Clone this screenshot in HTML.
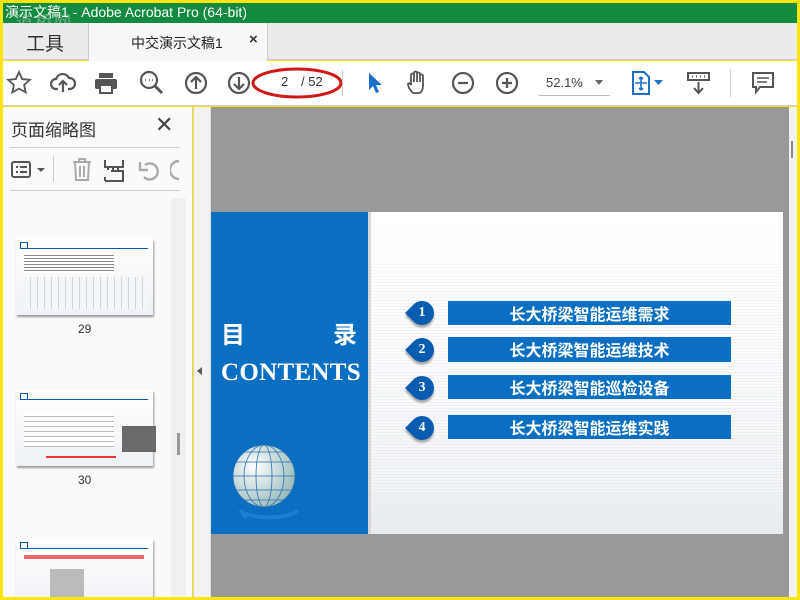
<!DOCTYPE html>
<html><head><meta charset="utf-8"><style>
*{margin:0;padding:0;box-sizing:border-box}
body{width:800px;height:600px;overflow:hidden;background:#ffe600;font-family:"Liberation Sans","Noto Sans CJK SC",sans-serif;position:relative}
.a{position:absolute}
svg{position:absolute}
.thumb{position:absolute;left:13px;width:137px;height:76px;background:linear-gradient(#fff,#eef1f5);box-shadow:1px 2px 2px #999}
.thumb .h{position:absolute;left:4px;top:3px;width:8px;height:7px;border:1.5px solid #0a5cb0}
.thumb .l{position:absolute;left:12px;top:9px;width:120px;height:1px;background:#0a5cb0}
.bar{position:absolute;left:448px;width:283px;background:#0a6fc2;color:#fff;font-weight:bold;font-size:16px;text-align:center;font-family:"Noto Sans CJK SC",sans-serif}
.num{position:absolute;left:410px;width:24px;height:24px;background:#0a5cb0;border-radius:50% 50% 50% 0;transform:rotate(45deg);box-shadow:2px 2px 2px #aaa}
.num span{display:block;transform:rotate(-45deg);color:#fff;font:bold 14px "Liberation Serif",serif;text-align:center;line-height:24px}
</style></head><body>
<div class="a" style="left:3px;top:3px;width:794px;height:20px;background:#128a3f;color:#fff;font-size:14px;line-height:19px;padding-left:2px">演示文稿1 - Adobe Acrobat Pro (64-bit)</div>
<div class="a" style="left:16px;top:8px;color:#c8d0c8;font-size:17px;opacity:.5;letter-spacing:2px">道桥网</div>
<div class="a" style="left:3px;top:23px;width:794px;height:37px;background:#ebebeb;border-bottom:1px solid #ccc"></div>
<div class="a" style="left:26px;top:29px;font-size:19px;color:#333">工具</div>
<div class="a" style="left:88px;top:23px;width:180px;height:38px;background:#f7f7f7;border-left:1px solid #ccc;border-right:1px solid #ccc"></div>
<div class="a" style="left:131px;top:33px;font-size:14px;color:#222">中交演示文稿1</div>
<div class="a" style="left:249px;top:31px;font-size:15px;color:#333;font-weight:bold">×</div>
<div class="a" style="left:3px;top:61px;width:794px;height:45px;background:#fff;border-bottom:1px solid #ccc"></div>
<svg style="left:6px;top:70px" width="26" height="26" viewBox="0 0 26 26"><path d="M13 2l3.2 7 7.6.8-5.7 5.1 1.6 7.5L13 18.6l-6.7 3.8 1.6-7.5L2.2 9.8l7.6-.8z" fill="none" stroke="#555" stroke-width="1.8"/></svg>
<svg style="left:50px;top:70px" width="26" height="26" viewBox="0 0 26 26"><path d="M8 19H6a5 5 0 0 1 0-10 7 7 0 0 1 13-1 5 5 0 0 1 1 11h-2M13 22V11M9 15l4-4 4 4" fill="none" stroke="#555" stroke-width="2.2"/></svg>
<svg style="left:93px;top:70px" width="26" height="26" viewBox="0 0 26 26"><rect x="6" y="3" width="14" height="5" fill="#555"/><rect x="2" y="9" width="22" height="10" rx="2" fill="#555"/><rect x="7" y="15" width="12" height="8" fill="#fff" stroke="#555" stroke-width="2"/></svg>
<svg style="left:139px;top:70px" width="26" height="26" viewBox="0 0 26 26"><circle cx="10" cy="10" r="8" fill="none" stroke="#555" stroke-width="2.2"/><path d="M16 16l7 7" stroke="#555" stroke-width="3"/><path d="M6 10h1M10 10h1M14 10h-1" stroke="#555" stroke-width="1.6"/></svg>
<svg style="left:183px;top:70px" width="26" height="26" viewBox="0 0 26 26"><circle cx="13" cy="13" r="10" fill="none" stroke="#555" stroke-width="2.2"/><path d="M13 19V7M8 12l5-5 5 5" fill="none" stroke="#555" stroke-width="2.2"/></svg>
<svg style="left:226px;top:70px" width="26" height="26" viewBox="0 0 26 26"><circle cx="13" cy="13" r="10" fill="none" stroke="#555" stroke-width="2.2"/><path d="M13 7v12M8 14l5 5 5-5" fill="none" stroke="#555" stroke-width="2.2"/></svg>
<div class="a" style="left:281px;top:74px;font-size:13px;color:#333">2</div>
<div class="a" style="left:301px;top:74px;font-size:13px;color:#333">/ 52</div>
<svg style="left:250px;top:64px" width="96" height="38" viewBox="0 0 96 38"><ellipse cx="47" cy="19" rx="44" ry="14" fill="none" stroke="#d01818" stroke-width="3"/></svg>
<div class="a" style="left:342px;top:70px;width:1px;height:26px;background:#ccc"></div>
<svg style="left:366px;top:71px" width="20" height="24" viewBox="0 0 20 24"><path d="M3 2v17l4-4 3 7 3-1-3-7h6z" fill="#1a6fc9"/></svg>
<svg style="left:406px;top:70px" width="26" height="26" viewBox="0 0 26 26"><path d="M7 23c-3-3-5-6-5-9 0-1 2-1 3 1V5a1.3 1.3 0 0 1 3 0v7V3a1.3 1.3 0 0 1 3 0v9V4a1.3 1.3 0 0 1 3 0v8V6a1.3 1.3 0 0 1 3 0v10c0 4-2 7-4 7z" fill="none" stroke="#555" stroke-width="1.8"/></svg>
<svg style="left:450px;top:70px" width="26" height="26" viewBox="0 0 26 26"><circle cx="13" cy="13" r="10" fill="none" stroke="#555" stroke-width="2.2"/><path d="M8 13h10" stroke="#555" stroke-width="2.2"/></svg>
<svg style="left:494px;top:70px" width="26" height="26" viewBox="0 0 26 26"><circle cx="13" cy="13" r="10" fill="none" stroke="#555" stroke-width="2.2"/><path d="M8 13h10M13 8v10" stroke="#555" stroke-width="2.2"/></svg>
<div class="a" style="left:546px;top:75px;font-size:13px;color:#444">52.1%</div>
<div class="a" style="left:595px;top:80px;border:4px solid transparent;border-top:5px solid #666"></div>
<div class="a" style="left:539px;top:95px;width:71px;height:1px;background:#bbb"></div>
<svg style="left:631px;top:70px" width="36" height="26" viewBox="0 0 36 26"><path d="M2 2h11l5 5v17H2z" fill="#fff" stroke="#1a6fc9" stroke-width="2"/><path d="M10 7v13M4 13h12M10 7l-2 2M10 7l2 2M10 20l-2-2M10 20l2-2" stroke="#1a6fc9" stroke-width="1.6" fill="none"/><path d="M23 10h9l-4.5 5z" fill="#1a6fc9"/></svg>
<svg style="left:686px;top:70px" width="26" height="26" viewBox="0 0 26 26"><rect x="2" y="3" width="21" height="7" fill="none" stroke="#555" stroke-width="2"/><path d="M6 6.5h1M10 6.5h1M14 6.5h1M18 6.5h1" stroke="#555" stroke-width="2"/><path d="M12.5 12v11M8 18l4.5 5 4.5-5" fill="none" stroke="#555" stroke-width="2"/></svg>
<div class="a" style="left:730px;top:69px;width:1px;height:28px;background:#ccc"></div>
<svg style="left:751px;top:71px" width="24" height="24" viewBox="0 0 24 24"><path d="M2 2h20v14H9l-4 5v-5H2z" fill="none" stroke="#555" stroke-width="2"/><path d="M6 7h12M6 11h10" stroke="#555" stroke-width="1.6"/></svg>
<!-- left panel -->
<div class="a" style="left:3px;top:107px;width:190px;height:490px;background:#fafafa;border-right:1px solid #ccc;overflow:hidden">
<div class="a" style="left:8px;top:9px;font-size:17px;color:#333">页面缩略图</div>
<div class="a" style="left:152px;top:5px;font-size:22px;color:#444">✕</div>
<div class="a" style="left:7px;top:40px;width:170px;height:1px;background:#ccc"></div>
<div class="a" style="left:50px;top:49px;width:1px;height:26px;background:#ccc"></div>
<div class="a" style="left:7px;top:83px;width:170px;height:1px;background:#ccc"></div>
<div class="a" style="left:168px;top:91px;width:15px;height:402px;background:#f0f0f0"></div>
<div class="a" style="left:174px;top:326px;width:3px;height:22px;background:#999"></div>
<div class="thumb" style="top:132px"><div class="h"></div><div class="l"></div><div class="a" style="left:8px;top:14px;width:90px;height:20px;background:repeating-linear-gradient(#fff 0 2px,#888 2px 3px)"></div><div class="a" style="left:8px;top:38px;width:122px;height:32px;background:repeating-linear-gradient(90deg,#f4f6f8 0 6px,#cfd4d8 6px 7px)"></div></div>
<div class="a" style="left:75px;top:215px;font-size:12px;color:#333">29</div>
<div class="thumb" style="top:283px"><div class="h"></div><div class="l"></div><div class="a" style="left:8px;top:22px;width:90px;height:35px;background:repeating-linear-gradient(#fff 0 4px,#bbb 4px 5px)"></div><div class="a" style="left:106px;top:36px;width:34px;height:26px;background:#6a6a6a"></div><div class="a" style="left:30px;top:66px;width:70px;height:2px;background:#e33"></div></div>
<div class="a" style="left:75px;top:366px;font-size:12px;color:#333">30</div>
<div class="thumb" style="top:432px;height:70px"><div class="h"></div><div class="l"></div><div class="a" style="left:8px;top:16px;width:120px;height:4px;background:#e66"></div><div class="a" style="left:34px;top:30px;width:34px;height:28px;background:#bbb"></div></div>
</div>
<svg style="left:10px;top:158px" width="40" height="24" viewBox="0 0 40 24"><rect x="2" y="4" width="18" height="15" rx="2" fill="none" stroke="#555" stroke-width="2"/><path d="M6 9h2M10 9h7M6 14h2M10 14h7" stroke="#555" stroke-width="2"/><path d="M27 10h8l-4 4z" fill="#555"/></svg>
<svg style="left:70px;top:157px" width="24" height="26" viewBox="0 0 24 26"><path d="M3 5h18M9 5V2h6v3M5 5l1 18h12l1-18M10 9v11M14 9v11" fill="none" stroke="#aaa" stroke-width="2"/></svg>
<svg style="left:103px;top:157px" width="22" height="26" viewBox="0 0 22 26"><path d="M2 3v7h18V3M2 20v4M8 14h12v10H2" fill="none" stroke="#555" stroke-width="2"/><path d="M4 12h2M9 12h2M14 12h2" stroke="#555" stroke-width="2"/></svg>
<svg style="left:137px;top:157px" width="26" height="26" viewBox="0 0 26 26"><path d="M8 8a8 8 0 1 1-1 12" fill="none" stroke="#aaa" stroke-width="2.4"/><path d="M3 5v8h8" fill="none" stroke="#aaa" stroke-width="2.4"/></svg>
<svg style="left:170px;top:157px" width="10" height="26" viewBox="0 0 10 26"><path d="M9 4a9 9 0 0 0 0 18" fill="none" stroke="#aaa" stroke-width="2.4"/></svg>
<!-- collapse strip -->
<div class="a" style="left:194px;top:107px;width:17px;height:490px;background:#f2f2f2;border-right:1px solid #ddd"></div>
<div class="a" style="left:197px;top:367px;border:4px solid transparent;border-right:5px solid #555;border-left:0"></div>
<!-- page area -->
<div class="a" style="left:211px;top:107px;width:578px;height:490px;background:#999"></div>
<div class="a" style="left:789px;top:107px;width:8px;height:490px;background:#f2f2f2"></div>
<div class="a" style="left:791px;top:141px;width:2px;height:17px;background:#888"></div>
<!-- slide -->
<div class="a" style="left:211px;top:212px;width:572px;height:322px;background:linear-gradient(#fff 0%,#fafbfc 40%,#e9ecef 100%)"></div>
<div class="a" style="left:370px;top:262px;width:413px;height:230px;opacity:.35;background:repeating-linear-gradient(#fff 0 2px,#dfe2e6 2px 3px)"></div>
<div class="a" style="left:211px;top:212px;width:157px;height:322px;background:#0a6fc2"></div>
<div class="a" style="left:368px;top:212px;width:3px;height:322px;background:#d8d8d8"></div>
<div class="a" style="left:221px;top:315px;color:#fff;font:bold 24px 'Noto Sans CJK SC',sans-serif">目</div>
<div class="a" style="left:333px;top:315px;color:#fff;font:bold 24px 'Noto Sans CJK SC',sans-serif">录</div>
<div class="a" style="left:221px;top:359px;color:#fff;font:bold 25px 'Liberation Serif',serif;letter-spacing:.3px">CONTENTS</div>
<svg style="left:226px;top:438px" width="82" height="88" viewBox="0 0 82 88"><defs><radialGradient id="g" cx=".35" cy=".35" r=".7"><stop offset="0" stop-color="#fff"/><stop offset="1" stop-color="#9bb"/></radialGradient></defs><circle cx="38" cy="38" r="31" fill="url(#g)"/><g fill="none" stroke="#2a6fb0" stroke-width=".8"><ellipse cx="38" cy="38" rx="31" ry="31"/><ellipse cx="38" cy="38" rx="20" ry="31"/><ellipse cx="38" cy="38" rx="8" ry="31"/><path d="M7 38h62M10 24h56M10 52h56M18 14h40M18 62h40"/></g><path d="M14 72a30 10 0 0 0 58 0" fill="none" stroke="#1a7fd0" stroke-width="4"/><path d="M20 82l-6-6 8-2" fill="#1a7fd0"/></svg>
<div class="num" style="top:301px"><span>1</span></div>
<div class="num" style="top:338px"><span>2</span></div>
<div class="num" style="top:376px"><span>3</span></div>
<div class="num" style="top:416px"><span>4</span></div>
<div class="bar" style="top:301px;height:24px;line-height:24px">长大桥梁智能运维需求</div>
<div class="bar" style="top:337px;height:25px;line-height:25px">长大桥梁智能运维技术</div>
<div class="bar" style="top:375px;height:24px;line-height:24px">长大桥梁智能巡检设备</div>
<div class="bar" style="top:415px;height:24px;line-height:24px">长大桥梁智能运维实践</div>
</body></html>
